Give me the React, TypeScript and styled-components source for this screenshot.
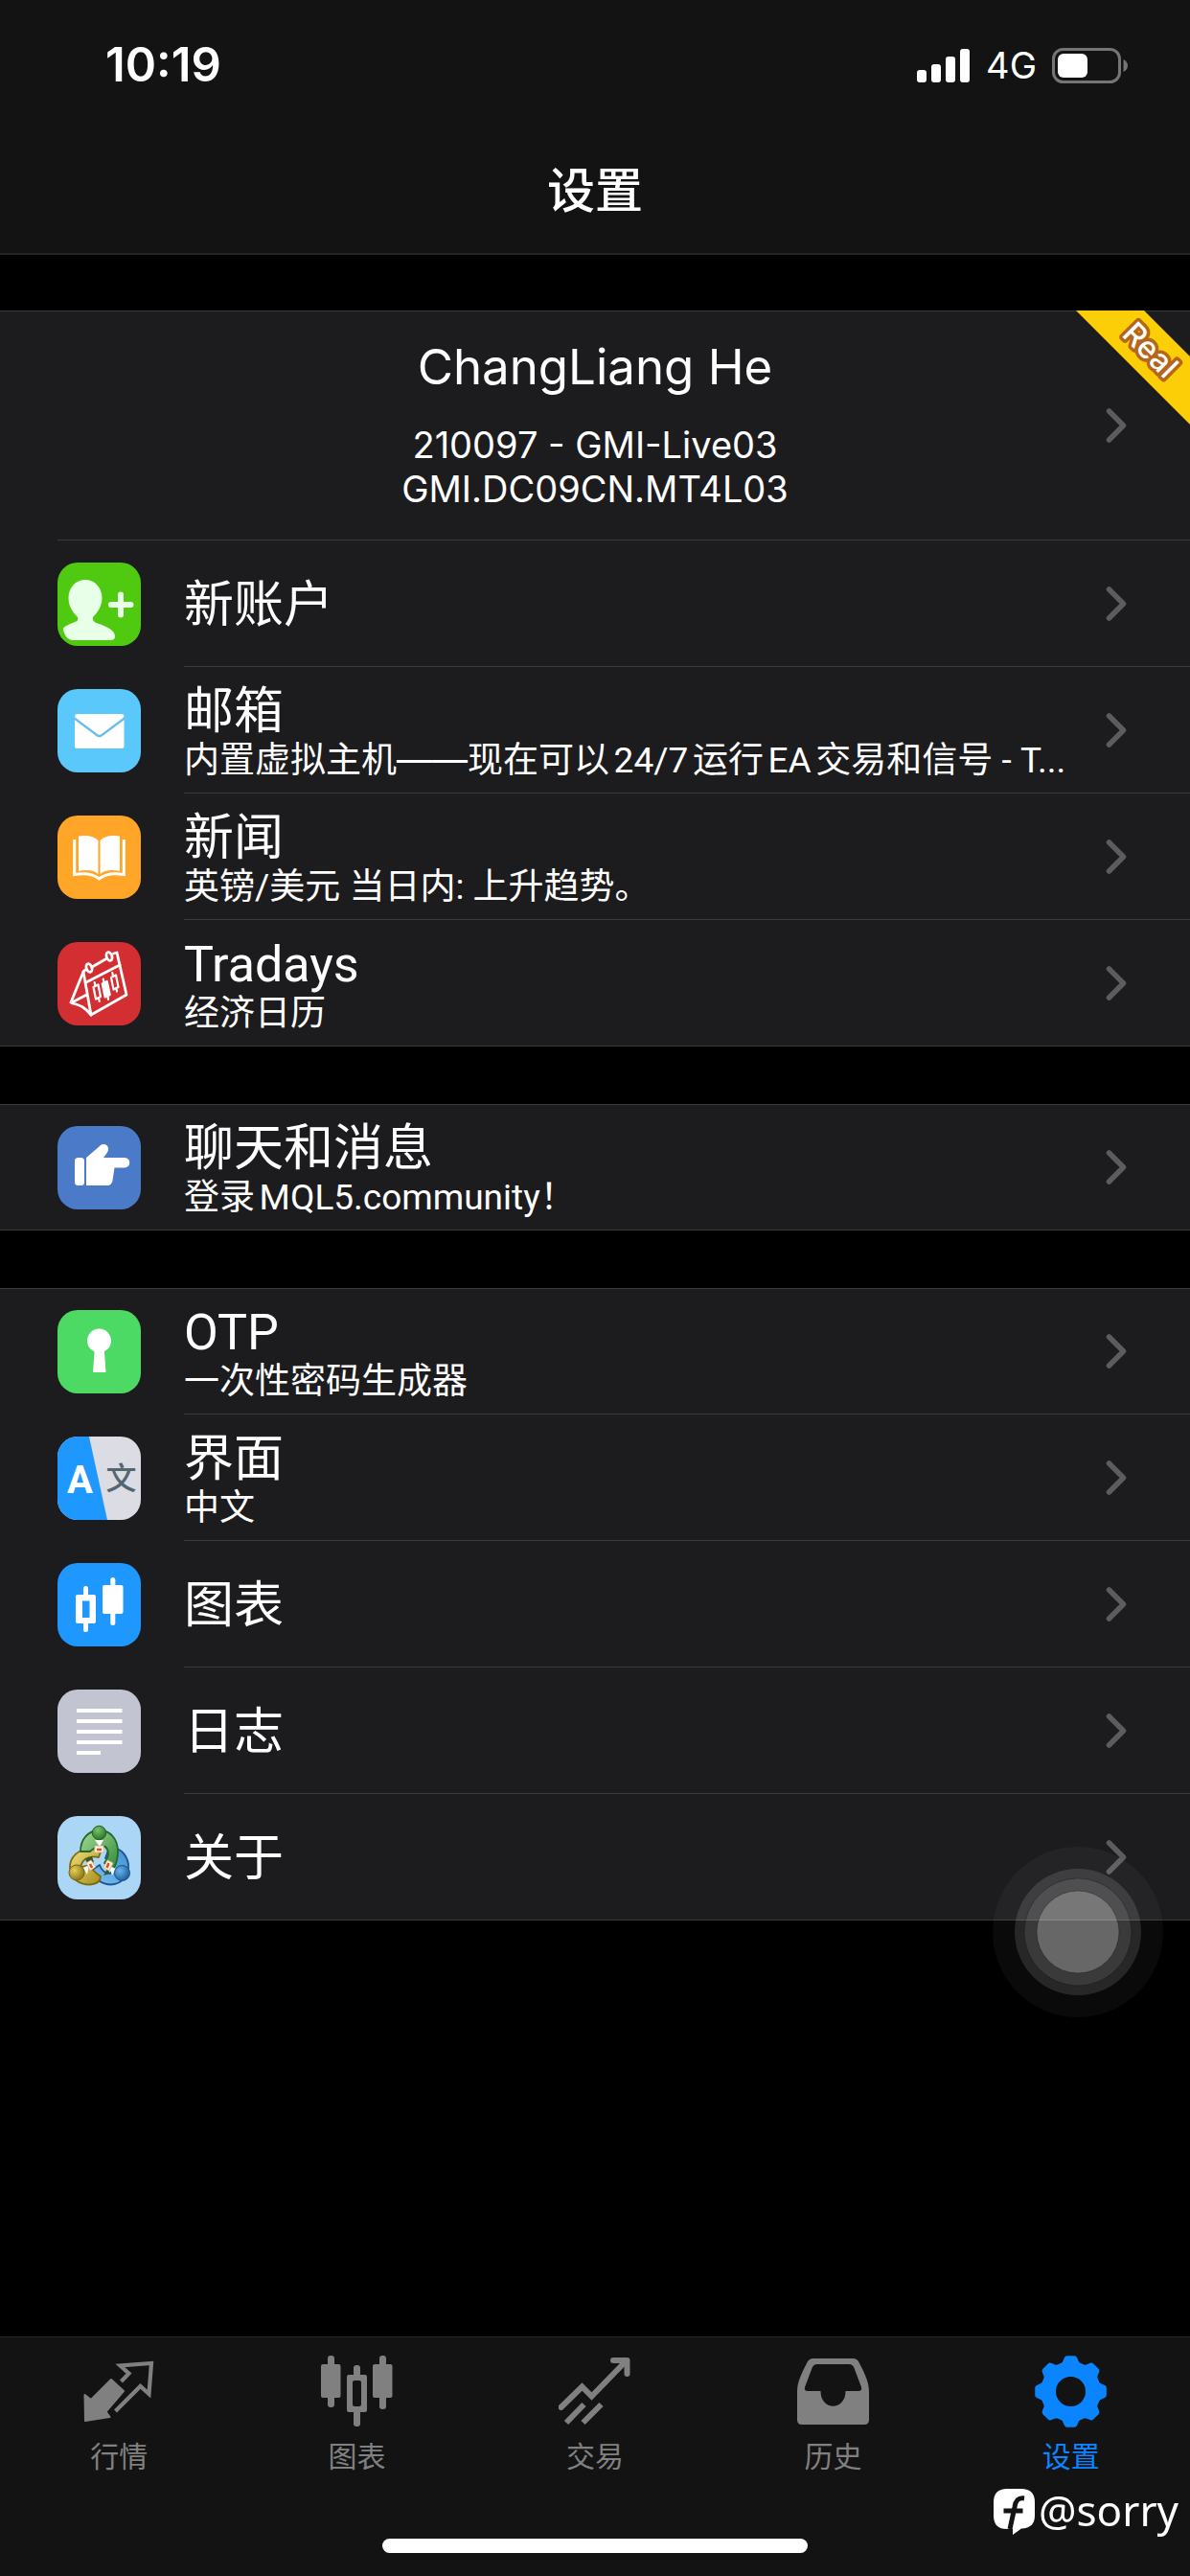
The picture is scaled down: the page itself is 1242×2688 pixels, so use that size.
import React from "react";
import styled, { createGlobalStyle } from "styled-components";

const GlobalStyle = createGlobalStyle`
  *, *::before, *::after { box-sizing: border-box; }
  html, body { margin: 0; background: #000; }
  body {
    font-family: Inter, "Noto Sans CJK SC", sans-serif;
    color: #fff;
    text-autospace: normal;
  }
`;

const Screen = styled.div`
  display: flex;
  flex-direction: column;
  min-height: 100vh;
  background: #000;
`;

const Header = styled.header`
  background: #131313;
  border-bottom: 2px solid #262628;
`;

const StatusBar = styled.div`
  display: flex;
  align-items: center;
  justify-content: space-between;
  height: 132px;
  padding: 4px 65px 0 110px;
`;

const Clock = styled.time`
  font-size: 49px;
  line-height: 56px;
  font-weight: 600;
`;

const StatusIcons = styled.div`
  display: flex;
  align-items: center;
  gap: 16px;
`;

const Network = styled.span`
  font-size: 38px;
  line-height: 44px;
`;

const PageTitle = styled.h1`
  margin: 0;
  height: 132px;
  font-size: 50px;
  line-height: 134px;
  font-weight: 500;
  text-align: center;
`;

const Main = styled.main`
  flex: 1;
  display: flex;
  flex-direction: column;
  gap: 60px;
  padding: 58px 0;
`;

const Group = styled.section`
  position: relative;
  background: #1c1c1e;
  box-shadow: inset 0 1px #3a3a3c, inset 0 -1px #3a3a3c;
`;

const plainButton = `
  border: 0;
  margin: 0;
  padding: 0;
  background: none;
  color: inherit;
  font: inherit;
  cursor: pointer;
`;

const AccountRow = styled.button`
  ${plainButton}
  display: grid;
  grid-template-columns: 22px 1fr 22px;
  align-items: center;
  width: calc(100% - 60px);
  height: 240px;
  margin-left: 60px;
  padding: 0 66px 0 6px;
  border-bottom: 1px solid #3a3a3c;
`;

const AccountText = styled.span`
  grid-column: 2;
  display: flex;
  flex-direction: column;
  align-items: center;
  padding-bottom: 2px;
`;

const AccountName = styled.span`
  font-size: 51px;
  line-height: 60px;
  margin-bottom: 28px;
`;

const AccountLine = styled.span`
  font-size: 38px;
  line-height: 46px;
`;

const Ribbon = styled.svg`
  position: absolute;
  top: 0;
  right: 0;
`;

const RowButton = styled.button`
  ${plainButton}
  display: flex;
  align-items: center;
  gap: 45px;
  width: 100%;
  height: 132px;
  padding-left: 60px;
  font-family: Roboto, "Noto Sans CJK SC", sans-serif;
  text-align: left;
`;

const RowBody = styled.span<{ $divided: boolean }>`
  flex: 1;
  min-width: 0;
  height: 100%;
  display: flex;
  align-items: center;
  justify-content: space-between;
  gap: 36px;
  padding-right: 66px;
  border-bottom: 1px solid ${(p) => (p.$divided ? "#3a3a3c" : "transparent")};
`;

const RowText = styled.span`
  display: flex;
  flex-direction: column;
  min-width: 0;
  padding-top: 4px;
`;

const RowTitle = styled.span`
  font-size: 52px;
  line-height: 60px;
`;

const RowSubtitle = styled.span`
  font-size: 37px;
  line-height: 42px;
  white-space: nowrap;
`;

const WideDash = styled.span`
  font-family: Inter, sans-serif;
  line-height: 1;
`;

const IconTile = styled.svg`
  flex: none;
  width: 87px;
  height: 87px;
  border-radius: 21px;
`;

const TabBar = styled.nav`
  background: #131313;
  border-top: 1px solid #262628;
  padding: 19px 0 24px;
`;

const Tabs = styled.div`
  display: grid;
  grid-template-columns: repeat(5, 1fr);
`;

const Tab = styled.button<{ $active: boolean }>`
  ${plainButton}
  display: flex;
  flex-direction: column;
  align-items: center;
  gap: 12px;
  color: ${(p) => (p.$active ? "#0a84ff" : "#808080")};
`;

const TabLabel = styled.span`
  font-size: 30px;
  line-height: 36px;
`;

const HomeIndicator = styled.div`
  width: 444px;
  height: 15px;
  margin: 68px auto 0;
  border-radius: 8px;
  background: #fff;
`;

const TouchButton = styled.button`
  ${plainButton}
  position: fixed;
  right: 28px;
  bottom: 583px;
  width: 178px;
  height: 178px;
  border-radius: 50%;
`;

const Watermark = styled.div`
  position: fixed;
  right: 12px;
  bottom: 35px;
  display: flex;
  align-items: center;
  gap: 4px;
  font-family: "Noto Sans", sans-serif;
  font-size: 44px;
  line-height: 60px;
`;

const WatermarkName = styled.span`
  padding-bottom: 4px;
`;

const Chevron = () => (
  <svg width="22" height="38" viewBox="0 0 22 38" aria-hidden="true">
    <path d="M3.5 4 L18.5 19 L3.5 34" fill="none" stroke="#5c5c60" strokeWidth="5.5" strokeLinecap="round" strokeLinejoin="round" />
  </svg>
);

const tile = (bg: string, art: React.ReactNode) => (
  <IconTile viewBox="0 0 87 87" aria-hidden="true">
    <rect width="87" height="87" fill={bg} />
    {art}
  </IconTile>
);

const NewAccountIcon = () =>
  tile(
    "#4fca10",
    <>
      <path
        d="M29 18 C39 18 46.500 26 46.500 37 C46.500 46 41 53 37 57 C36.500 61 38 62 42 63.500 C52 67 60 71 60 77 C60 80 58 81 55 81 L16 81 C10 81 6 74 6 68.500 C9 65 16 63 19.500 61.500 C22 60 21.500 58 21 57 C16 52 11.500 46 11.500 37 C11.500 26 19 18 29 18 Z"
        fill="#e8ffe8"
      />
      <path d="M56 44 H76.500 M66 33.500 V54.500" stroke="#e8ffe8" strokeWidth="6" strokeLinecap="round" />
    </>
  );

const MailIcon = () =>
  tile(
    "#5ac8fa",
    <>
      <rect x="18" y="26" width="51.500" height="36" rx="2.500" fill="#fff" />
      <path d="M17 30 L41 48 Q43.700 50 46.500 48 L70.500 30" fill="none" stroke="#6cbdec" strokeWidth="2.400" />
    </>
  );

const NewsIcon = () =>
  tile(
    "#ffa628",
    <>
      <path d="M22 21.500 C31 20 38 21.500 42.500 26 V61 C38 57 31 56 22 58 Z M65 21.500 C56 20 49 21.500 44.500 26 V61 C49 57 56 56 65 58 Z" fill="#fff" />
      <path d="M17.700 25 V61.500 C29 59.500 37 60.500 43.500 66 C50 60.500 58 59.500 69.300 61.500 V25" fill="none" stroke="#fff" strokeWidth="3" />
    </>
  );

const TradaysIcon = () =>
  tile(
    "#d32f32",
    <g fill="none" stroke="#fff" strokeWidth="2.800" strokeLinejoin="round" strokeLinecap="round">
      <path d="M27 31 L14 63 C20 66 25 64 35 76 L72 55 L62 11 L58.500 12" />
      <path d="M27 31 L35 76 M30 42 L65 24 M27 31 L29 29 M37 25.500 L50 18 M15 63 L30.500 55" />
      <ellipse cx="33" cy="27" rx="2.800" ry="4.500" transform="rotate(-20 33 27)" />
      <ellipse cx="54" cy="15" rx="2.800" ry="4.500" transform="rotate(-20 54 15)" />
      <path d="M37.500 47 L42.500 44.500 L45 57 L40 59.500 Z M39.500 45.500 L38.700 42 M43 58.500 L43.700 62 M56 37 L61 34.500 L63.500 47 L58.500 49.500 Z M58 35.500 L57.300 32 M61.500 48.500 L62 51.500" strokeWidth="2.200" />
      <path d="M46.700 43.500 L51.700 41 L54.700 55 L49.700 57.500 Z M48.500 42 L47.700 38.500 M52.500 56 L53 60" fill="#fff" strokeWidth="2.200" />
    </g>
  );

const ChatIcon = () =>
  tile(
    "#4b7bc8",
    <g fill="#fff">
      <rect x="18" y="33" width="10" height="29" rx="3.500" />
      <path d="M30 33 L44 21 C47 17.500 53 19 53 24 C53 26 52 27.500 51 29 L48 33 H70 C77 33 77 43.500 70 43.500 H59.500 L57.500 57 Q56.500 62 52 62 H30 Z" />
    </g>
  );

const OtpIcon = () =>
  tile(
    "#4cd964",
    <>
      <circle cx="43.500" cy="32" r="12.500" fill="#fff" />
      <path d="M39 38 H48.500 L50.500 65 H37 Z" fill="#fff" />
    </>
  );

const LanguageIcon = () =>
  tile(
    "#dcdce4",
    <>
      <path d="M0 0 H33 L52 87 H0 Z" fill="#1e98ff" />
      <text x="23.500" y="59" textAnchor="middle" fontFamily="Roboto, sans-serif" fontWeight="700" fontSize="40" fill="#fff">A</text>
      <text x="66.500" y="55" textAnchor="middle" fontFamily="'Noto Sans CJK SC', sans-serif" fontWeight="500" fontSize="32" fill="#54666f">文</text>
    </>
  );

const ChartIcon = () =>
  tile(
    "#1e98ff",
    <g fill="#fff">
      <rect x="27" y="24" width="5" height="12" rx="2.500" />
      <rect x="27" y="60" width="5" height="12" rx="2.500" />
      <path fillRule="evenodd" d="M21 33 H38 Q40 33 40 35 V61 Q40 63 38 63 H21 Q19 63 19 61 V35 Q19 33 21 33 Z M26 39.500 V57 H33.500 V39.500 Z" />
      <rect x="47" y="23" width="21.500" height="30" rx="2" />
      <rect x="55.300" y="15" width="5" height="50" rx="2.500" />
    </g>
  );

const JournalIcon = () =>
  tile(
    "#c2c4d1",
    <path d="M20 22 H67.500 M20 33 H67.500 M20 44 H67.500 M20 55 H67.500 M20 66 H45" stroke="#fff" strokeWidth="4" />
  );

const AboutIcon = () =>
  tile(
    "#abd6f5",
    <>
      <defs>
        <radialGradient id="greenHead" cx="0.4" cy="0.3" r="0.8"><stop offset="0" stopColor="#7cc26a" /><stop offset="1" stopColor="#1f6a22" /></radialGradient>
        <radialGradient id="goldHead" cx="0.35" cy="0.35" r="0.8"><stop offset="0" stopColor="#e6cf55" /><stop offset="1" stopColor="#7c6a10" /></radialGradient>
        <radialGradient id="blueHead" cx="0.35" cy="0.35" r="0.8"><stop offset="0" stopColor="#69b3ea" /><stop offset="1" stopColor="#12508f" /></radialGradient>
        <linearGradient id="greenBody" x1="0" y1="0" x2="1" y2="1"><stop offset="0" stopColor="#a5d99a" /><stop offset="1" stopColor="#2f8a35" /></linearGradient>
        <linearGradient id="goldBody" x1="0" y1="0" x2="1" y2="1"><stop offset="0" stopColor="#f0e07c" /><stop offset="1" stopColor="#a58e1c" /></linearGradient>
        <linearGradient id="blueBody" x1="1" y1="0" x2="0" y2="1"><stop offset="0" stopColor="#3f8fd4" /><stop offset="1" stopColor="#7dc0f2" /></linearGradient>
      </defs>
      <g strokeWidth="1.800" strokeLinejoin="round">
        <path d="M54 33 C64 32 72 39 74 50 C75 60 69 71 56 71.500 C46 71.500 38 65 35 57 L44 51 C46 57 50 60 55 60 C59 57 60 52 57 47 L50 44 Z" fill="url(#blueBody)" stroke="#1c5590" />
        <path d="M45 37 C33 31 19 35 14 47 C12 53 13 56 14 60 C16 66 24 72 34 71.500 C41 71 45 69 45 63 C39 59 35 55 33 50 C30 53 27 53 24 52 C27 44 34 41 43 43 Z" fill="url(#goldBody)" stroke="#7c6a10" />
        <path d="M24 37 C24 24 32 15 44 15 C56 15 63 25 63 37 C63 45 61 51 58 56 L49 49 C54 42 54 36 50 32 C44 31 38 33 34 37 Z" fill="url(#greenBody)" stroke="#23692a" />
        <path d="M29 45 L36 42 L38 48 L32 51 Z M48 62 L55 60 L52 55 Z" fill="#2d5c25" />
        <path d="M39 25 H48 L44 32 Z M27 54 L33 51 L31 61 Z M54 52 L61 55 L57 62 Z" fill="#fff" />
      </g>
      <g fill="#fff4df" stroke="#d8ad86" strokeWidth="0.800">
        <path d="M39 31 L48 31 L48.500 38 L38.500 38 Z" />
        <path d="M30 49 L35 46 L40 53 L34 57 Z" />
        <path d="M52 46 L58 49 L54 57 L48 54 Z" />
      </g>
      <path d="M41 35 H46 M34 50 L36 54 M53.500 49 L51.500 54" stroke="#dd5327" strokeWidth="2.600" />
      <circle cx="43.500" cy="17.500" r="7.200" fill="url(#greenHead)" stroke="#235f25" />
      <circle cx="20" cy="59" r="8" fill="url(#goldHead)" stroke="#77640f" />
      <circle cx="67.500" cy="59.500" r="8" fill="url(#blueHead)" stroke="#17538e" />
    </>
  );

const tabSvg = (art: React.ReactNode) => (
  <svg width="75" height="75" viewBox="0 0 75 75" fill="currentColor" aria-hidden="true">
    {art}
  </svg>
);

const QuotesTabIcon = () =>
  tabSvg(
    <>
      <path d="M1.500 41 L8 46 L29 25 L42 37 L23.500 58.700 L27.500 64 L2 68 Z" stroke="currentColor" strokeWidth="2" strokeLinejoin="round" />
      <path d="M39.500 27 L47.500 18.700 L38.500 10.500 L71 8 L68.500 40 L59.500 32 L33.500 58" fill="none" stroke="currentColor" strokeWidth="4.200" />
    </>
  );

const ChartTabIcon = () =>
  tabSvg(
    <>
      <rect x="0" y="9" width="20.500" height="35" rx="2" />
      <rect x="7" y="0" width="7" height="54" rx="3" />
      <path fillRule="evenodd" d="M29 20 H46 Q48 20 48 22 V57 Q48 59 46 59 H29 Q27 59 27 57 V22 Q27 20 29 20 Z M35 26 Q33 26 33 28 V51 Q33 53 35 53 H40 Q42 53 42 51 V28 Q42 26 40 26 Z" />
      <rect x="34" y="10" width="7" height="12" rx="3" />
      <rect x="34" y="57" width="7" height="17" rx="3" />
      <rect x="54" y="9" width="20.500" height="35" rx="2" />
      <rect x="61" y="0" width="7" height="56" rx="3" />
    </>
  );

const TradeTabIcon = () =>
  tabSvg(
    <g fill="none" stroke="currentColor" strokeWidth="6">
      <path d="M2.500 54 L24.500 32.500 L34.500 42.500 L70 6" strokeLinecap="round" />
      <path d="M57 5 H71.500 V19" strokeLinecap="round" strokeLinejoin="round" />
      <path d="M8 70 L26.500 51 M25.500 70 L44.500 51" />
    </g>
  );

const HistoryTabIcon = () =>
  tabSvg(
    <path
      fillRule="evenodd"
      d="M17 3 H58 Q63 3 65 8 C70 18 75 27 75 38 V67 Q75 72 70 72 H5 Q0 72 0 67 V38 C0 27 5 18 10 8 Q12 3 17 3 Z M21 9 Q17 9 15.500 13 L8 33 Q7 37 11 37 H24.500 C24.500 58 50.500 58 50.500 37 H64 Q68 37 67 33 L59.500 13 Q58 9 54 9 Z"
    />
  );

/** Outline of an eight-toothed gear with softly rounded teeth, centred in the 75px box. */
const gearPath = (() => {
  const points: string[] = [];
  for (let i = 0; i < 8; i += 1) {
    const base = (i * Math.PI) / 4 - Math.PI / 2;
    [
      [-0.27, 28.5],
      [-0.2, 30],
      [-0.11, 34.5],
      [0.11, 34.5],
      [0.2, 30],
      [0.27, 28.5],
    ].forEach(([offset, radius]) => {
      const x = 37.5 + radius * Math.cos(base + offset);
      const y = 37.5 + radius * Math.sin(base + offset);
      points.push(`${x.toFixed(2)} ${y.toFixed(2)}`);
    });
  }
  return `M${points.join("L")}Z`;
})();

const SettingsTabIcon = () =>
  tabSvg(
    <>
      <path d={gearPath} stroke="currentColor" strokeWidth="6" strokeLinejoin="round" />
      <circle cx="37.500" cy="37.500" r="15.500" fill="#131313" />
    </>
  );

interface Item {
  title: string;
  subtitle?: React.ReactNode;
  Icon: () => React.JSX.Element;
}

const mailPreview = (
  <>
    内置虚拟主机<WideDash>——</WideDash>现在可以24/7运行EA交易和信号 - T...
  </>
);

const serviceItems: Item[] = [
  { title: "新账户", Icon: NewAccountIcon },
  { title: "邮箱", subtitle: mailPreview, Icon: MailIcon },
  { title: "新闻", subtitle: "英镑/美元 当日内: 上升趋势。", Icon: NewsIcon },
  { title: "Tradays", subtitle: "经济日历", Icon: TradaysIcon },
];

const chatItems: Item[] = [{ title: "聊天和消息", subtitle: "登录MQL5.community！", Icon: ChatIcon }];

const appItems: Item[] = [
  { title: "OTP", subtitle: "一次性密码生成器", Icon: OtpIcon },
  { title: "界面", subtitle: "中文", Icon: LanguageIcon },
  { title: "图表", Icon: ChartIcon },
  { title: "日志", Icon: JournalIcon },
  { title: "关于", Icon: AboutIcon },
];

const tabs = [
  { label: "行情", Icon: QuotesTabIcon },
  { label: "图表", Icon: ChartTabIcon },
  { label: "交易", Icon: TradeTabIcon },
  { label: "历史", Icon: HistoryTabIcon },
  { label: "设置", Icon: SettingsTabIcon },
];

const Rows = ({ items }: { items: Item[] }) => (
  <>
    {items.map(({ title, subtitle, Icon }, index) => (
      <RowButton key={title} type="button">
        <Icon />
        <RowBody $divided={index < items.length - 1}>
          <RowText>
            <RowTitle>{title}</RowTitle>
            {subtitle && <RowSubtitle>{subtitle}</RowSubtitle>}
          </RowText>
          <Chevron />
        </RowBody>
      </RowButton>
    ))}
  </>
);

export default function App() {
  return (
    <Screen>
      <GlobalStyle />
      <Header>
        <StatusBar>
          <Clock>10:19</Clock>
          <StatusIcons>
            <svg width="56" height="35" viewBox="0 0 56 35" fill="#fff" aria-hidden="true">
              <rect x="0" y="22" width="10" height="13" rx="3" />
              <rect x="15" y="16" width="10" height="19" rx="3" />
              <rect x="30" y="8" width="10" height="27" rx="3" />
              <rect x="45" y="0" width="10" height="35" rx="3" />
            </svg>
            <Network>4G</Network>
            <svg width="79" height="37" viewBox="0 0 79 37" aria-hidden="true">
              <rect x="1.500" y="1.500" width="69" height="34" rx="10" fill="none" stroke="#757575" strokeWidth="3" />
              <rect x="6" y="6" width="31" height="25" rx="6" fill="#fff" />
              <path d="M74.500 12 Q79 14.500 79 18.500 Q79 22.500 74.500 25 Z" fill="#757575" />
            </svg>
          </StatusIcons>
        </StatusBar>
        <PageTitle>设置</PageTitle>
      </Header>

      <Main>
        <Group>
          <AccountRow type="button">
            <AccountText>
              <AccountName>ChangLiang He</AccountName>
              <AccountLine>210097 - GMI-Live03</AccountLine>
              <AccountLine>GMI.DC09CN.MT4L03</AccountLine>
            </AccountText>
            <Chevron />
          </AccountRow>
          <Ribbon width="119" height="119" viewBox="0 0 119 119">
            <path d="M0 0 H71 L119 48 V119 Z" fill="#fbce07" />
            <text
              x="78"
              y="41"
              transform="rotate(45 78 41)"
              textAnchor="middle"
              dominantBaseline="central"
              fontFamily="Inter, sans-serif"
              fontWeight="500"
              fontSize="32"
              fill="#fff"
              stroke="#b5661a"
              strokeWidth="7"
              strokeLinejoin="round"
              paintOrder="stroke"
            >
              Real
            </text>
          </Ribbon>
          <Rows items={serviceItems} />
        </Group>
        <Group>
          <Rows items={chatItems} />
        </Group>
        <Group>
          <Rows items={appItems} />
        </Group>
      </Main>

      <TabBar>
        <Tabs>
          {tabs.map(({ label, Icon }) => (
            <Tab key={label} type="button" $active={label === "设置"}>
              <Icon />
              <TabLabel>{label}</TabLabel>
            </Tab>
          ))}
        </Tabs>
        <HomeIndicator />
      </TabBar>

      <TouchButton type="button" aria-label="AssistiveTouch">
        <svg width="178" height="178" viewBox="0 0 178 178" fill="#fff" aria-hidden="true">
          <circle cx="89" cy="89" r="89" fillOpacity="0.04" />
          <circle cx="89" cy="89" r="66" fillOpacity="0.12" />
          <circle cx="89" cy="89" r="56" fillOpacity="0.09" stroke="#000" strokeOpacity="0.3" />
          <circle cx="89" cy="89" r="43" fillOpacity="0.23" stroke="#000" strokeOpacity="0.3" />
        </svg>
      </TouchButton>

      <Watermark>
        <svg width="43" height="48" viewBox="0 0 43 48" aria-hidden="true">
          <path d="M14 0 H29 Q43 0 43 14 V28 Q43 41 29 41.500 L20 48 V42 H14 Q0 42 0 28 V14 Q0 0 14 0 Z" fill="#fff" />
          <path d="M32 10 C25 9 23 13 22 19 L17 42 M10.500 23 H30.500" fill="none" stroke="#131313" strokeWidth="5" />
        </svg>
        <WatermarkName>@sorry</WatermarkName>
      </Watermark>
    </Screen>
  );
}
